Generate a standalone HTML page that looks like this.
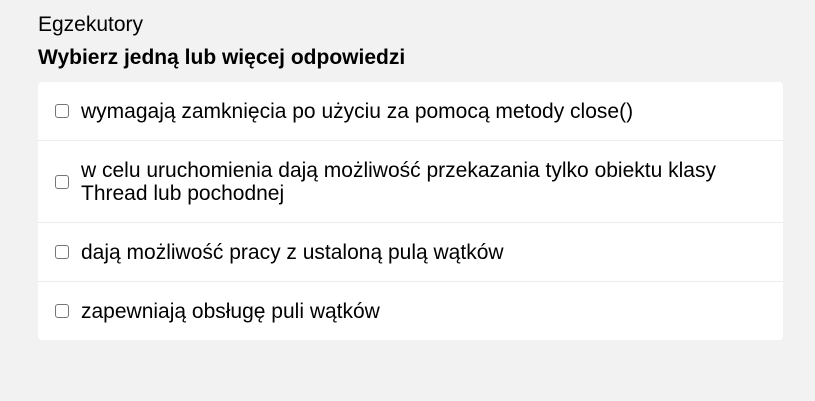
<!DOCTYPE html>
<html><head><style>
body{margin:0;background:#f2f2f2;font-family:"Liberation Sans",sans-serif;color:#000;width:815px;height:401px;overflow:hidden}
.t{position:absolute;left:38px;top:13px;font-size:21px;line-height:24px}
.b{position:absolute;left:38px;top:46px;font-size:21px;line-height:24px;font-weight:bold}
.card{position:absolute;left:38px;top:82px;width:745px;background:#fff;border-radius:4px}
.r{display:flex;align-items:center;border-top:1px solid #ececec;padding:0 0 0 17px;font-size:21px;line-height:23px}
.r:first-child{border-top:none}
.cb{width:12px;height:12px;border:1px solid #767676;border-radius:3px;margin-right:12px;flex:none}
</style></head><body>
<div class="t">Egzekutory</div>
<div class="b">Wybierz jedną lub więcej odpowiedzi</div>
<div class="card">
<div class="r" style="height:58px"><span class="cb"></span>wymagają zamknięcia po użyciu za pomocą metody close()</div>
<div class="r" style="height:81px"><span class="cb"></span><span>w celu uruchomienia dają możliwość przekazania tylko obiektu klasy<br>Thread lub pochodnej</span></div>
<div class="r" style="height:58px"><span class="cb"></span>dają możliwość pracy z ustaloną pulą wątków</div>
<div class="r" style="height:58px"><span class="cb"></span>zapewniają obsługę puli wątków</div>
</div>
</body></html>
